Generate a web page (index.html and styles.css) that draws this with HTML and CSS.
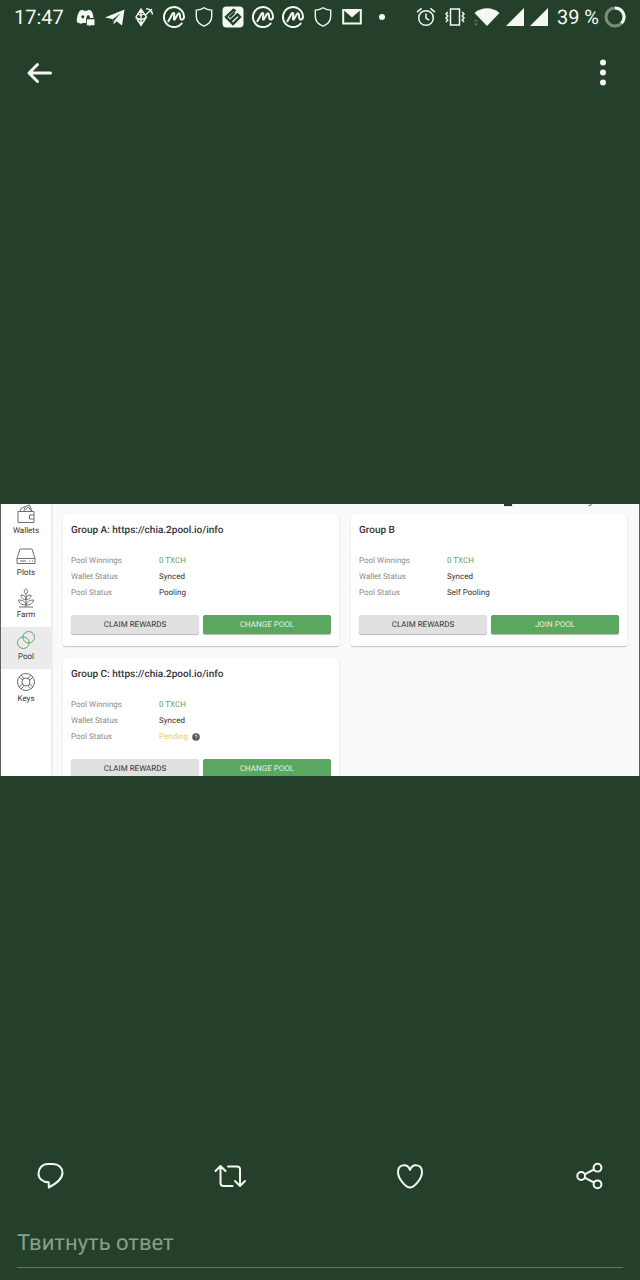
FILE: index.html
```html
<!DOCTYPE html>
<html lang="ru">
<head>
<meta charset="utf-8">
<meta name="viewport" content="width=device-width, initial-scale=1">
<title>Просмотр фото</title>
<link rel="stylesheet" href="styles.css">
</head>
<body>
<svg width="0" height="0" class="defs" aria-hidden="true">
  <symbol id="coin" viewBox="0 0 22 22"><g fill="none" stroke="currentColor" stroke-width="2" stroke-linecap="round" stroke-linejoin="round"><path d="M18.600 17.600A10 10 0 1 1 21 11c0 2.800-3.600 3.600-3.800.8l-.2-2.600c-.1-2.200-1.400-2.400-2.300-.8l-2.700 4.700c-.5.8-1.200.5-1.100-.4l.4-4.600c.1-1.400-1-1.600-1.700-.5L5.400 15.200"/></g></symbol>
  <symbol id="shield" viewBox="0 0 22 22"><path d="M11 1.800c2 1.600 4.600 2.200 7.700 2.300v6.400c0 4.500-3 7.700-7.700 9.700-4.700-2-7.700-5.200-7.700-9.700V4.100c3.100-.1 5.700-.7 7.700-2.300z" fill="none" stroke="currentColor" stroke-width="1.400"/></symbol>
  <symbol id="signal" viewBox="0 0 20 20"><path d="M19 1v18H1z" fill="currentColor"/></symbol>
</svg>

<header class="top">
  <div class="status">
    <time class="clock">17:47</time>
    <div class="notices">
      <svg viewBox="0 0 22 22"><path d="M6 4.500l3-.7.600 1h3.800l.6-1 3 .7c1.500 2 2.400 4.500 2.500 7.500H12v5H8.500l-1.200.8c-2-.3-3.500-1-4.500-1.800C2.500 11.500 4 7 6 4.500z" fill="currentColor"/><ellipse cx="8.800" cy="10.800" rx="1.500" ry="1.600" fill="#25402a"/><path d="M12.700 12v-1.200c.2-2 2.900-2 3 0V12z" fill="#25402a"/><path d="M12.800 13.200h7.700v6h-4l-1.500 1.300v-1.300h-2.200z" fill="currentColor"/></svg>
      <svg viewBox="0 0 22 22"><path d="M1 11.500 20.500 3.500 18 19.500l-5.500-4.200-2.700 2.900-1.300-5.200z" fill="currentColor"/><path d="M8.800 13.300 16.500 7.300l-6 7-.7 3.200z" fill="#25402a"/></svg>
      <svg viewBox="0 0 22 22"><g fill="none" stroke="currentColor" stroke-width="1.400"><path d="M8 3 3 11l5 8.500L13.500 11zM8 3v16.500M4.500 7.500l3.500 2 3.500-2M2.500 11.500 8 14l5.500-2.500M4 14.500 8 17l4-2.500M4.500 7.500 8 5l3.500 2.500"/><path d="M12.500 9 19 3M13 3c3-.6 6 1.800 6.500 5.500"/></g></svg>
      <svg viewBox="0 0 22 22"><use href="#coin"/></svg>
      <svg viewBox="0 0 22 22"><use href="#shield"/></svg>
      <svg viewBox="0 0 22 22"><rect x=".5" y=".5" width="21" height="21" rx="4" fill="currentColor"/><g fill="none" stroke="#25402a" stroke-width="2.400"><path d="M13.500 5.500 11.500 3.800 4 11l7 7 7-7-2.500-2.500-6.500 6"/><path d="M7.500 11.500l5-5"/></g></svg>
      <svg viewBox="0 0 22 22"><use href="#coin"/></svg>
      <svg viewBox="0 0 22 22"><use href="#coin"/></svg>
      <svg viewBox="0 0 22 22"><use href="#shield"/></svg>
      <svg viewBox="0 0 22 22"><path d="M2.200 4h17.600v13.500H2.200z" fill="none" stroke="currentColor" stroke-width="2"/><path d="M2 3.500h18l-9 8z" fill="currentColor"/></svg>
      <svg viewBox="0 0 22 22"><circle cx="11" cy="11" r="3" fill="currentColor"/></svg>
    </div>
    <div class="system">
      <svg class="alarm" viewBox="0 0 22 22"><g fill="none" stroke="currentColor" stroke-width="1.500"><circle cx="11" cy="12" r="7.300"/><path d="M11 7.500V12l3.200 2.200M2 6.200 6.600 2.400M20 6.200l-4.600-3.800"/></g></svg>
      <svg class="vibrate" viewBox="0 0 22 22"><g fill="none" stroke="currentColor" stroke-width="1.500"><path d="M6.500 3h9v16h-9zM3.800 6 2 8l1.800 2L2 12l1.800 2L2 16M18.200 6 20 8l-1.800 2 1.800 2-1.800 2 1.800 2"/></g></svg>
      <svg class="wifi" viewBox="0 0 28 22"><path d="M1.500 7C8.500.8 19.500.8 26.500 7L14 20z" fill="currentColor"/><path d="M1 15.500 3 13l2 2.500zM1 17.500h4L3 20z" fill="#5d755f"/></svg>
      <svg class="bars" viewBox="0 0 20 20"><use href="#signal"/></svg>
      <svg class="bars" viewBox="0 0 20 20"><use href="#signal"/></svg>
      <span class="level">39 %</span>
      <svg class="ring" viewBox="0 0 22 22"><g fill="none" stroke-width="3"><circle cx="11" cy="11" r="9" stroke="#7b8d7c"/><path d="M11 2a9 9 0 0 1 6.500 15.200" stroke="currentColor"/></g></svg>
    </div>
  </div>
  <nav class="appbar">
    <button class="tool" type="button" aria-label="Назад"><svg viewBox="0 0 28 28"><path d="M25.500 14H4M12.500 5.500 4 14l8.500 8.500" fill="none" stroke="currentColor" stroke-width="3" stroke-linecap="round" stroke-linejoin="round"/></svg></button>
    <button class="tool" type="button" aria-label="Ещё"><svg viewBox="0 0 28 28"><g fill="currentColor"><circle cx="14" cy="3.500" r="3"/><circle cx="14" cy="13.500" r="3"/><circle cx="14" cy="23.500" r="3"/></g></svg></button>
  </nav>
</header>

<main class="photo">
  <nav class="side">
    <a class="item" href="#wallets"><svg viewBox="0 0 20 20"><path d="M2 7.500h16v11H2zM18 11h-4.500v4H18M4 7.500 5.500 4l8-3 2.500 6.500M7 7.500 12.500 3l3 4.500M8 5.500l1-2"/></svg>Wallets</a>
    <a class="item" href="#plots"><svg viewBox="0 0 20 20"><path d="M4 3h12l3 9.500v5H1v-5zM1 12.500h18M4 15h6M13 15h1M16 15h1"/></svg>Plots</a>
    <a class="item" href="#farm"><svg viewBox="0 0 20 20"><path d="M3 19h14M10 19V6M10 6C7.500 4 8 2 10 .8 12 2 12.500 4 10 6zM10 11.500C6 11.500 5 9.500 5 7c3 0 5 1.500 5 4.500zM10 11.500c4 0 5-2 5-4.500-3 0-5 1.500-5 4.500zM10 17c-4.500 0-7-2-7.500-5 4 0 7 1.500 7.500 5zM10 17c4.500 0 7-2 7.500-5-4 0-7 1.500-7.500 5z"/></svg>Farm</a>
    <a class="item current" href="#pool" aria-current="page"><svg viewBox="0 0 20 20"><circle cx="12.700" cy="7.300" r="5.800"/><circle cx="7.300" cy="12.700" r="5.800"/></svg>Pool</a>
    <a class="item" href="#keys"><svg viewBox="0 0 20 20"><circle cx="10" cy="10" r="8.500"/><circle cx="10" cy="10" r="4"/><path d="M3 5l4 3.500M5 3l3.500 4M17 5l-4 3.500M15 3l-3.500 4M3 15l4-3.500M5 17l3.500-4M17 15l-4-3.500M15 17l-3.500-4"/></svg>Keys</a>
  </nav>
  <div class="board">
    <p class="total"><svg viewBox="0 0 10 10"><path d="M0 1h9v8H0z" fill="currentColor"/></svg>Total Pool Winnings&nbsp; 0 TXCH</p>
    <div class="groups">
      <section class="card">
        <h2>Group A: https://chia.2pool.io/info</h2>
        <dl>
          <dt>Pool Winnings</dt><dd class="won">0 TXCH</dd>
          <dt>Wallet Status</dt><dd>Synced</dd>
          <dt>Pool Status</dt><dd>Pooling</dd>
        </dl>
        <div class="actions"><button class="btn" type="button">CLAIM REWARDS</button><button class="btn go" type="button">CHANGE POOL</button></div>
      </section>
      <section class="card">
        <h2>Group B</h2>
        <dl>
          <dt>Pool Winnings</dt><dd class="won">0 TXCH</dd>
          <dt>Wallet Status</dt><dd>Synced</dd>
          <dt>Pool Status</dt><dd>Self Pooling</dd>
        </dl>
        <div class="actions"><button class="btn" type="button">CLAIM REWARDS</button><button class="btn go" type="button">JOIN POOL</button></div>
      </section>
      <section class="card">
        <h2>Group C: https://chia.2pool.io/info</h2>
        <dl>
          <dt>Pool Winnings</dt><dd class="won">0 TXCH</dd>
          <dt>Wallet Status</dt><dd>Synced</dd>
          <dt>Pool Status</dt><dd class="pending">Pending<svg class="help" viewBox="0 0 10 10"><circle cx="5" cy="5" r="4.700" fill="#555"/><path d="M3.600 4c0-2 2.900-2 2.900-.2C6.500 4.800 5 4.900 5 6M5 7v1" fill="none" stroke="#fff" stroke-width="1"/></svg></dd>
        </dl>
        <div class="actions"><button class="btn" type="button">CLAIM REWARDS</button><button class="btn go" type="button">CHANGE POOL</button></div>
      </section>
    </div>
  </div>
</main>

<footer class="bottom">
  <div class="social">
    <button class="tool" type="button" aria-label="Ответить"><svg viewBox="0 0 32 32"><path d="M14.800 27.500v-5.200C8.500 22.300 4.500 18.500 4.500 13.500c0-5.300 4-9.500 9.500-9.500h5c5.500 0 9.500 4 9.500 8.800 0 6.200-5.500 10.200-13.700 14.700z"/></svg></button>
    <button class="tool" type="button" aria-label="Ретвитнуть"><svg viewBox="0 0 32 32"><path d="M1.500 11 6.500 6l5 5M6.500 6.500V23a3 3 0 0 0 3 3h9M14 6.500h9a3 3 0 0 1 3 3V26M21 21l5 5 5-5"/></svg></button>
    <button class="tool" type="button" aria-label="Нравится"><svg viewBox="0 0 32 32"><path d="M16 27.500C12.500 27.500 4 19.500 4 12c0-8 9.500-9 12-2 2.500-7 12-6 12 2 0 7.500-8.500 15.500-12 15.500z"/></svg></button>
    <button class="tool" type="button" aria-label="Поделиться"><svg viewBox="0 0 32 32"><circle cx="7.200" cy="16" r="3.900"/><circle cx="23.500" cy="7.700" r="3.900"/><circle cx="23.500" cy="24.300" r="3.900"/><path d="M11 14.200l9-4.700M11 17.800l9 4.700"/></svg></button>
  </div>
  <input class="reply" type="text" placeholder="Твитнуть ответ" aria-label="Твитнуть ответ">
</footer>
</body>
</html>
```
FILE: styles.css
```css
* { box-sizing: border-box; }

body {
  margin: 0;
  min-height: 100vh;
  display: grid;
  grid-template-columns: minmax(0, 1fr);
  grid-template-rows: 1fr auto 1fr;
  background: #25402a;
  color: #f3f8f2;
  font-family: Roboto, "Noto Sans", sans-serif;
  text-rendering: geometricPrecision;
}

svg { display: block; flex: none; }
.defs { position: absolute; }
button { font: inherit; color: inherit; border: 0; padding: 0; cursor: pointer; text-rendering: inherit; }

/* Status bar */
.status {
  display: flex;
  align-items: center;
  height: 34px;
  padding: 0 14px;
  font-size: 20px;
  line-height: 34px;
}
.clock { flex: none; width: 60px; }
.notices {
  flex: 0 1 319px;
  display: flex;
  justify-content: space-between;
}
.notices svg { width: 22px; height: 22px; }
.system {
  display: flex;
  align-items: center;
  margin-left: auto;
}
.alarm, .vibrate { width: 22px; height: 22px; margin-right: 7px; }
.wifi { width: 28px; height: 22px; }
.bars { width: 20px; height: 20px; margin-left: 4px; }
.level { margin: 0 5px 0 8px; white-space: nowrap; }
.ring { width: 22px; height: 22px; }

/* App bar */
.appbar {
  display: flex;
  justify-content: space-between;
  padding: 15px 13px 15px 15px;
}
.tool {
  display: grid;
  place-items: center;
  width: 48px;
  height: 48px;
  background: none;
}
.appbar svg { width: 28px; height: 28px; }

/* Opened picture */
.photo {
  display: flex;
  height: 272px;
  overflow: hidden;
  background: #fafafa;
  border: solid #5b655b;
  border-width: 0 1px;
  color: #333;
  font-size: 8px;
  line-height: 16px;
}
.side {
  flex: none;
  width: 50px;
  margin-top: -3px;
  background: #fff;
  box-shadow: 0 0 3px #ccc;
}
.item {
  display: flex;
  flex-direction: column;
  align-items: center;
  height: 42px;
  padding-top: 3px;
  line-height: 14px;
  color: #333;
  text-decoration: none;
}
.item svg {
  width: 20px;
  height: 20px;
  fill: none;
  stroke: #707070;
  stroke-width: 1;
}
.item.current { background: #ebebeb; }
.item.current svg { stroke: #5aa868; }

.board { flex: 1; min-width: 0; padding: 0 12px; }
.total {
  display: flex;
  justify-content: flex-end;
  align-items: center;
  gap: 12px;
  height: 16px;
  margin: -10px 0 4px;
}
.total svg { width: 9px; height: 9px; }
.groups {
  display: grid;
  grid-template-columns: 1fr 1fr;
  gap: 12px;
}
.card {
  padding: 9px 8px 12px;
  background: #fff;
  border-radius: 2px;
  box-shadow: 0 1px 1px #c4c4c4, 0 0 2px #e8e8e8;
}
.card h2 {
  margin: 0;
  font-size: 10px;
  font-weight: 500;
  line-height: 16px;
}
.card dl {
  display: grid;
  grid-template-columns: 88px 1fr;
  margin: 14px 0;
}
.card dt { color: #8a8a8a; }
.card dd { margin: 0; }
.card .won { color: #5aa868; }
.card .pending { display: flex; align-items: center; gap: 4px; color: #e2cf72; }
.help { width: 8px; height: 8px; }
.actions {
  display: grid;
  grid-template-columns: 1fr 1fr;
  gap: 4px;
}
.btn {
  height: 19px;
  line-height: 19px;
  background: #e0e0e0;
  border-radius: 2px;
  box-shadow: 0 1px 1px #b4b4b4;
}
.go { background: #5aa760; color: #e4f3e4; }

/* Reply area */
.bottom { display: flex; flex-direction: column; justify-content: flex-end; }
.social {
  display: flex;
  justify-content: space-between;
  padding: 0 26px;
}
.social svg {
  width: 32px;
  height: 32px;
  fill: none;
  stroke: currentColor;
  stroke-width: 2;
  stroke-linejoin: round;
  stroke-linecap: round;
}
.reply {
  height: 48px;
  margin: 20px 17px 12px;
  padding: 0;
  background: none;
  border: 0;
  border-bottom: 1px solid #5b7a5f;
  border-radius: 0;
  outline: 0;
  color: inherit;
  font: inherit;
  font-size: 22px;
  text-rendering: inherit;
}
.reply::placeholder { color: #87a089; opacity: 1; }
```
